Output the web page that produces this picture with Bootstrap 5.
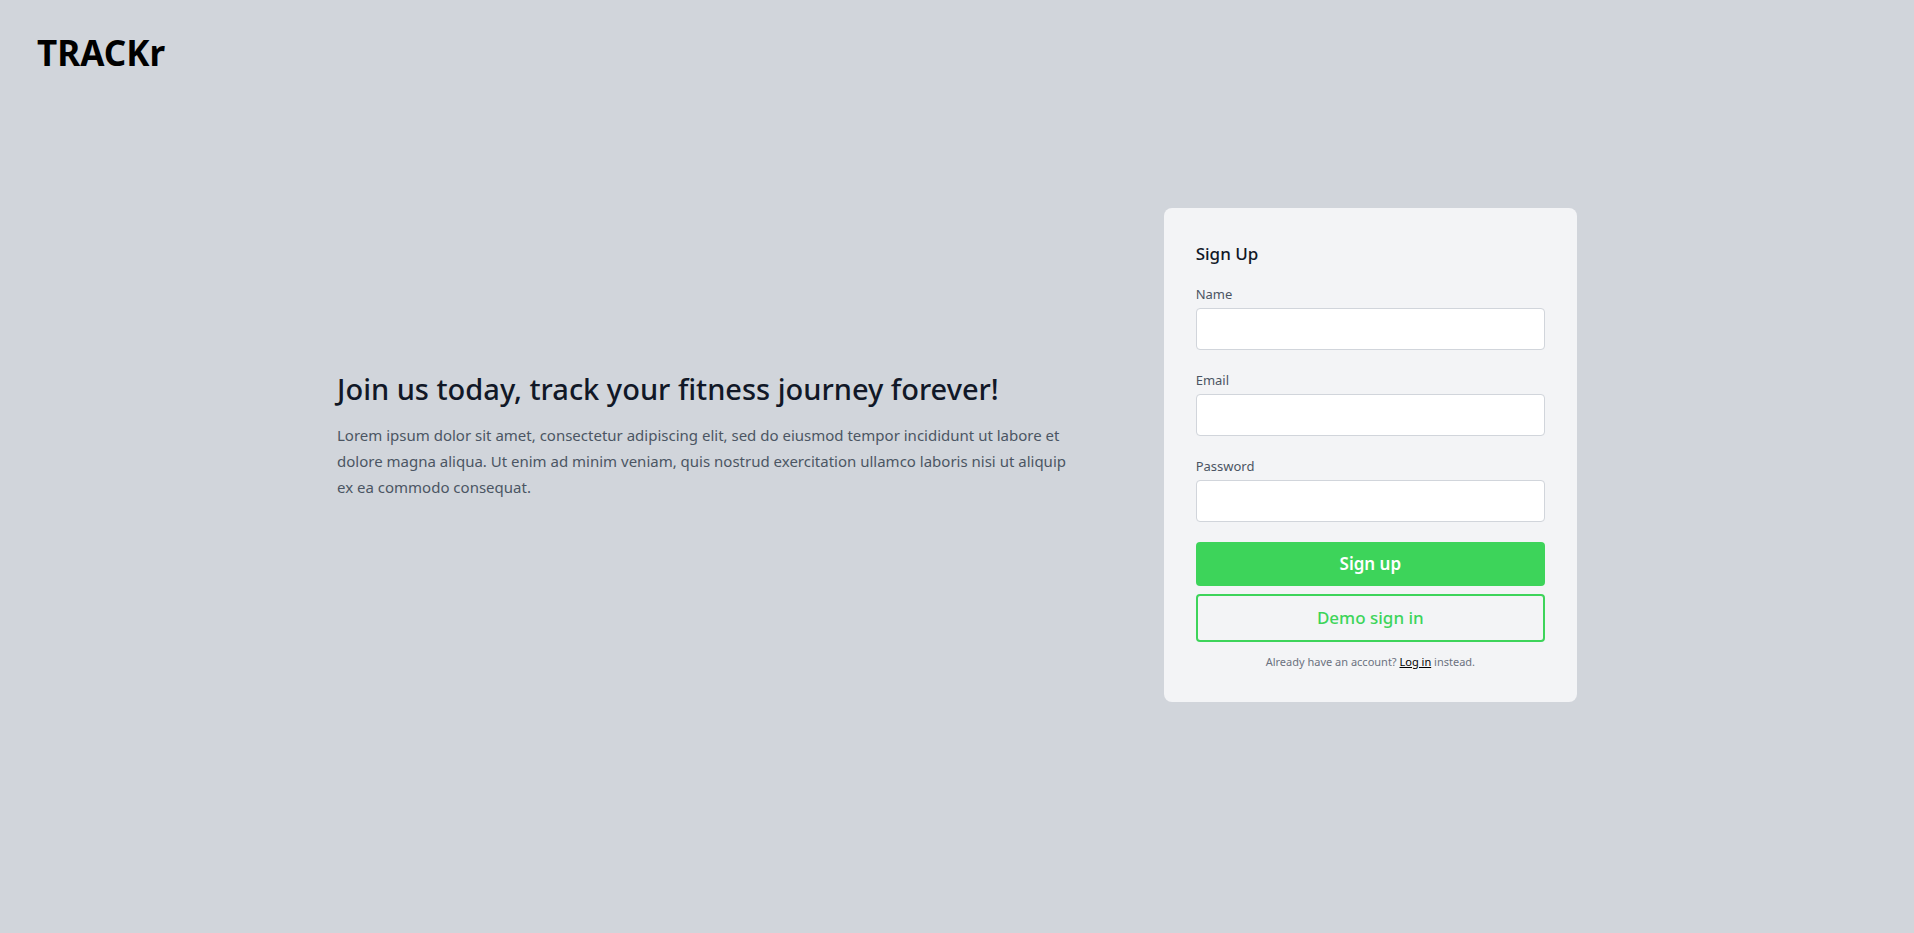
<!DOCTYPE html>
<html lang="en">
<head>
<meta charset="utf-8">
<meta name="viewport" content="width=device-width, initial-scale=1">
<title>TRACKr</title>
<link href="https://cdn.jsdelivr.net/npm/bootstrap@5.3.0/dist/css/bootstrap.min.css" rel="stylesheet">
<style>
  body { background: #d1d5db; color: #4b5563; font-family: "Noto Sans", "Open Sans", sans-serif; font-size: 15px; line-height: 26px; }
  .brand { color: #000; font-size: 35px; line-height: 40px; font-weight: 700; padding: 33px 37px 31px; }
  .page-wrap { max-width: 1280px; padding: 104px 20px 96px; }
  .pitch { width: 60%; padding: 0 12px 39px 0; }
  .pitch h1 { color: #111827; font-size: 29px; line-height: 36px; font-weight: 500; margin-bottom: 15px; }
  .signup { width: 33.3333%; background: #f3f4f6; border-radius: 8px; padding: 32px; }
  .signup h2 { color: #111827; font-size: 17px; line-height: 28px; font-weight: 500; margin-bottom: 12px; }
  .signup label { font-size: 13px; line-height: 28px; }
  .signup .form-control { height: 42px; border: 1px solid #d1d5db; border-radius: 4px; }
  .signup .btn { font-size: 17px; line-height: 28px; border-radius: 4px; padding: 8px; }
  .btn-fill, .btn-fill:hover { background: #3dd45a; color: #fff; border: 0; font-weight: 600; }
  .btn-line, .btn-line:hover { color: #3dd45a; border: 2px solid #3dd45a; font-weight: 500; }
  .note { color: #6b7280; font-size: 11px; line-height: 16px; }
  .note a { color: #000; }
  @media (max-width: 991px) { .pitch, .signup { width: 100%; } .page-wrap { padding-top: 24px; } }
</style>
</head>
<body>
<header class="brand">TRACKr</header>
<main class="page-wrap mx-auto d-flex flex-wrap align-items-center justify-content-between">
  <section class="pitch">
    <h1>Join us today, track your fitness journey forever!</h1>
    <p class="mb-0">Lorem ipsum dolor sit amet, consectetur adipiscing elit, sed do eiusmod tempor incididunt ut labore et dolore magna aliqua. Ut enim ad minim veniam, quis nostrud exercitation ullamco laboris nisi ut aliquip ex ea commodo consequat.</p>
  </section>
  <form class="signup d-flex flex-column">
    <h2>Sign Up</h2>
    <div class="mb-3">
      <label class="d-block" for="name">Name</label>
      <input class="form-control" type="text" id="name">
    </div>
    <div class="mb-3">
      <label class="d-block" for="email">Email</label>
      <input class="form-control" type="email" id="email">
    </div>
    <div class="mb-3">
      <label class="d-block" for="password">Password</label>
      <input class="form-control" type="password" id="password">
    </div>
    <div class="d-grid gap-2 mt-1">
      <button class="btn btn-fill" type="submit">Sign up</button>
      <button class="btn btn-line" type="button">Demo sign in</button>
    </div>
    <p class="note text-center mb-0 mt-2 pt-1">Already have an account? <a href="#">Log in</a> instead.</p>
  </form>
</main>
<script src="https://cdn.jsdelivr.net/npm/bootstrap@5.3.0/dist/js/bootstrap.bundle.min.js"></script>
</body>
</html>
